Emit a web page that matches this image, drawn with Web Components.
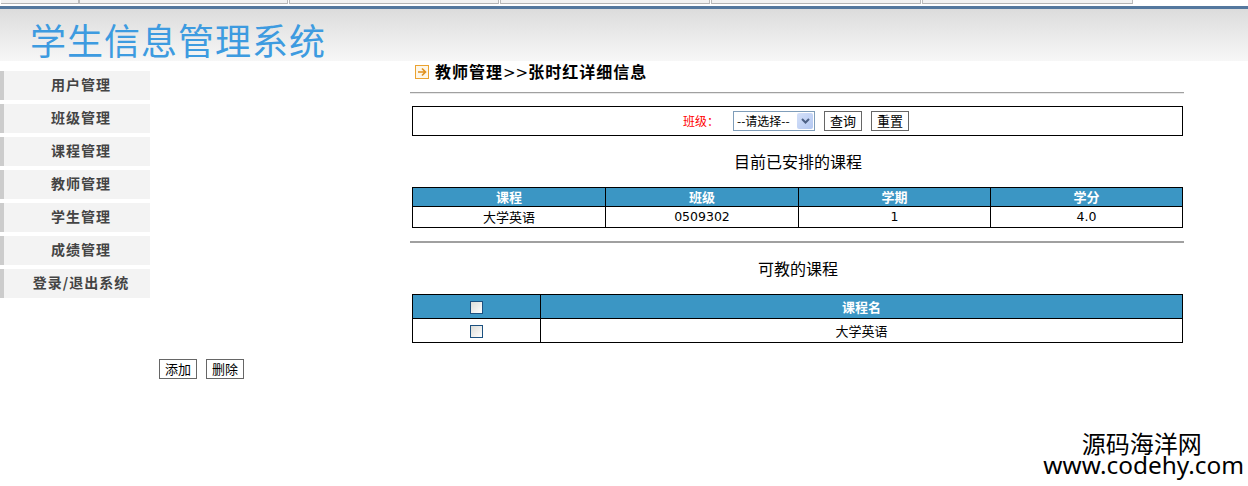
<!DOCTYPE html>
<html>
<head>
<meta charset="utf-8">
<style>
  html, body { margin: 0; padding: 0; background: #fff; }
  body { width: 1248px; height: 486px; overflow: hidden; font-family: "Liberation Sans", "Noto Sans CJK SC", sans-serif; color: #000; }
  .columns { display: flex; }
</style>
</head>
<body>
<top-tabs></top-tabs>
<page-banner>学生信息管理系统</page-banner>
<div class="columns">
  <side-menu>
    <menu-item>用户管理</menu-item>
    <menu-item>班级管理</menu-item>
    <menu-item>课程管理</menu-item>
    <menu-item>教师管理</menu-item>
    <menu-item>学生管理</menu-item>
    <menu-item>成绩管理</menu-item>
    <menu-item>登录/退出系统</menu-item>
  </side-menu>
  <main-panel>
    <crumb-title><b>教师管理</b><span>&gt;&gt;</span><b>张时红详细信息</b></crumb-title>
    <search-bar></search-bar>
    <section-title style="margin-top:15px">目前已安排的课程</section-title>
    <course-table style="margin-top:16px"></course-table>
    <section-title style="margin-top:15px">可教的课程</section-title>
    <teach-table style="margin-top:16px"></teach-table>
  </main-panel>
</div>
<action-bar></action-bar>
<water-mark></water-mark>

<script>
class TopTabs extends HTMLElement {
  constructor() {
    super();
    this.attachShadow({ mode: "open" });
    // browser tab strip cut off at the top of the shot
    const widths = [209, 210, 210, 210, 211];
    this.shadowRoot.innerHTML = `
      <style>
        :host { display: block; height: 6px; background: #fff; }
        .row { display: flex; gap: 1px; margin-left: 1px; height: 4px; }
        .row div { box-sizing: border-box; background: #f2f2f2; border-bottom: 1px solid #b4b4b4; border-right: 1px solid #bcbcbc; border-left: 1px solid #bcbcbc; }
        .row div:first-child { border-left: 0; width: 78px; margin-right: -1px; }
      </style>
      <div class="row"><div></div>${widths.map((w) => `<div style="width:${w}px"></div>`).join("")}</div>`;
  }
}
window.customElements.define("top-tabs", TopTabs);

class PageBanner extends HTMLElement {
  constructor() {
    super();
    this.attachShadow({ mode: "open" });
    this.shadowRoot.innerHTML = `
      <style>
        :host {
          display: block; height: 55px; box-sizing: border-box;
          border-top: 3px solid #54789e;
          background: linear-gradient(#dcdcdc, #f7f7f7);
          padding: 10px 0 0 30px;
          font-size: 36px; line-height: 40px; color: #3d9be0;
          font-family: "Noto Sans CJK SC", sans-serif; font-weight: 400;
          letter-spacing: 1px;
        }
      </style>
      <slot></slot>`;
  }
}
window.customElements.define("page-banner", PageBanner);

class SideMenu extends HTMLElement {
  constructor() {
    super();
    this.attachShadow({ mode: "open" });
    this.shadowRoot.innerHTML = `
      <style>
        :host { display: flex; flex-direction: column; gap: 4px; width: 150px; padding-top: 10px; }
      </style>
      <slot></slot>`;
  }
}
window.customElements.define("side-menu", SideMenu);

class MenuItem extends HTMLElement {
  constructor() {
    super();
    this.attachShadow({ mode: "open" });
    this.shadowRoot.innerHTML = `
      <style>
        :host {
          display: block; height: 29px; box-sizing: border-box;
          border-left: 4px solid #cccccc; background: #f3f3f3;
          font: bold 14px/27px "Noto Sans CJK SC", sans-serif; color: #444;
          text-align: center; padding-left: 8px; letter-spacing: 1px;
        }
      </style>
      <slot></slot>`;
  }
}
window.customElements.define("menu-item", MenuItem);

class MainPanel extends HTMLElement {
  constructor() {
    super();
    this.attachShadow({ mode: "open" });
    this.shadowRoot.innerHTML = `
      <style>
        :host { display: block; width: 774px; margin-left: 260px; }
      </style>
      <slot></slot>`;
  }
}
window.customElements.define("main-panel", MainPanel);

class CrumbTitle extends HTMLElement {
  constructor() {
    super();
    this.attachShadow({ mode: "open" });
    this.shadowRoot.innerHTML = `
      <style>
        :host {
          display: flex; align-items: center; gap: 6px; height: 32px; box-sizing: border-box;
          padding: 0 0 9px 5px; border-bottom: 1px solid #a0a0a0; box-shadow: 0 1px 0 #e8e8e8;
          font: 16px/24px "Noto Sans CJK SC", sans-serif; letter-spacing: 1px;
        }
        svg { flex: none; }
        ::slotted(b) { font-weight: 700; }
        ::slotted(span) { font-family: "DejaVu Sans", sans-serif; font-size: 15px; letter-spacing: 0; font-weight: 400; }
      </style>
      <svg width="14" height="14" viewBox="0 0 14 14">
        <rect x="0.5" y="0.5" width="13" height="13" fill="#fdf6e8" stroke="#eba22f"/>
        <path d="M3 7h7M7 3.5 10.5 7 7 10.5" fill="none" stroke="#e0901c" stroke-width="1.6"/>
      </svg>
      <div><slot></slot></div>`;
  }
}
window.customElements.define("crumb-title", CrumbTitle);

class FormButton extends HTMLElement {
  constructor() {
    super();
    this.attachShadow({ mode: "open" });
    this.shadowRoot.innerHTML = `
      <style>
        :host {
          display: inline-block; width: 38px; height: 20px; box-sizing: border-box;
          border: 1px solid #666; background: #fff;
          font: 13px/18px "Noto Sans CJK SC", sans-serif; text-align: center; color: #000;
        }
      </style>
      <slot></slot>`;
  }
}
window.customElements.define("form-button", FormButton);

class SearchBar extends HTMLElement {
  constructor() {
    super();
    this.attachShadow({ mode: "open" });
    this.shadowRoot.innerHTML = `
      <style>
        :host {
          display: flex; align-items: center; justify-content: center; gap: 9px;
          height: 30px; box-sizing: border-box; margin: 13px 1px 0 2px; padding-right: 3px;
          border: 1px solid #000;
          font: 12px/18px "Noto Sans CJK SC", sans-serif;
        }
        .label { color: #f00; margin-right: 5px; }
        .select {
          display: flex; align-items: center; justify-content: space-between;
          width: 82px; height: 20px; box-sizing: border-box; padding: 0 1px 0 3px;
          border: 1px solid #7f9db9; background: #fff;
        }
        .arrow { width: 16px; height: 16px; background: linear-gradient(135deg, #d4e0f8, #b4c8f2); border-radius: 2px; display: flex; align-items: center; justify-content: center; }
      </style>
      <span class="label">班级：</span>
      <div class="select">
        <span>--请选择--</span>
        <span class="arrow"><svg width="9" height="6" viewBox="0 0 9 6"><path d="M1 1l3.500 3.500L8 1" fill="none" stroke="#4d6185" stroke-width="2"/></svg></span>
      </div>
      <form-button>查询</form-button>
      <form-button>重置</form-button>`;
  }
}
window.customElements.define("search-bar", SearchBar);

class SectionTitle extends HTMLElement {
  constructor() {
    super();
    this.attachShadow({ mode: "open" });
    this.shadowRoot.innerHTML = `
      <style>
        :host {
          display: block; margin-left: 2px; text-align: center; height: 20px;
          font: 16px/20px "Noto Sans CJK SC", sans-serif; color: #000;
        }
      </style>
      <slot></slot>`;
  }
}
window.customElements.define("section-title", SectionTitle);

const tableStyle = `
  :host { display: block; margin-left: 2px; margin-right: 1px; }
  table { border-collapse: collapse; width: 770px; table-layout: fixed; font: 13px/16px "Noto Sans CJK SC", sans-serif; }
  th, td { border: 1px solid #000; text-align: center; padding: 0; }
  th { background: #3b96c4; color: #fff; font-weight: 700; }
  .num { font: 12.5px/16px "DejaVu Sans", sans-serif; }
`;

class CourseTable extends HTMLElement {
  constructor() {
    super();
    this.attachShadow({ mode: "open" });
    this.shadowRoot.innerHTML = `
      <style>${tableStyle}
        :host { padding-bottom: 13px; border-bottom: 2px solid #a0a0a0; margin-left: 0; margin-right: 0; }
        table { margin-left: 2px; }
        th { height: 18px; }
        td { height: 20px; }
      </style>
      <table>
        <colgroup><col style="width:193px"><col style="width:193px"><col style="width:192px"><col style="width:192px"></colgroup>
        <tr><th>课程</th><th>班级</th><th>学期</th><th>学分</th></tr>
        <tr><td>大学英语</td><td class="num">0509302</td><td class="num">1</td><td class="num">4.0</td></tr>
      </table>`;
  }
}
window.customElements.define("course-table", CourseTable);

class TeachTable extends HTMLElement {
  constructor() {
    super();
    this.attachShadow({ mode: "open" });
    const box = `<span class="box"></span>`;
    this.shadowRoot.innerHTML = `
      <style>${tableStyle}
        th, td { height: 23px; }
        .box {
          display: inline-block; width: 13px; height: 13px; box-sizing: border-box; vertical-align: middle;
          border: 1px solid #1c5180; background: linear-gradient(135deg, #dcdcd7, #fff);
        }
      </style>
      <table>
        <colgroup><col style="width:128px"><col style="width:642px"></colgroup>
        <tr><th>${box}</th><th>课程名</th></tr>
        <tr><td>${box}</td><td>大学英语</td></tr>
      </table>`;
  }
}
window.customElements.define("teach-table", TeachTable);

class ActionBar extends HTMLElement {
  constructor() {
    super();
    this.attachShadow({ mode: "open" });
    this.shadowRoot.innerHTML = `
      <style>
        :host { display: flex; gap: 9px; margin: 16px 0 0 159px; }
      </style>
      <form-button>添加</form-button>
      <form-button>删除</form-button>`;
  }
}
window.customElements.define("action-bar", ActionBar);

class WaterMark extends HTMLElement {
  constructor() {
    super();
    this.attachShadow({ mode: "open" });
    this.shadowRoot.innerHTML = `
      <style>
        :host {
          position: absolute; right: 4px; top: 432px; text-align: center; color: #000;
          font: 24px/22px "Noto Sans CJK SC", "Noto Sans", sans-serif;
        }
        .cn { padding-right: 4px; }
        .en { font-family: "Noto Sans", sans-serif; font-size: 24.4px; }
      </style>
      <div class="cn">源码海洋网</div>
      <div class="en">www.codehy.com</div>`;
  }
}
window.customElements.define("water-mark", WaterMark);
</script>
</body>
</html>
